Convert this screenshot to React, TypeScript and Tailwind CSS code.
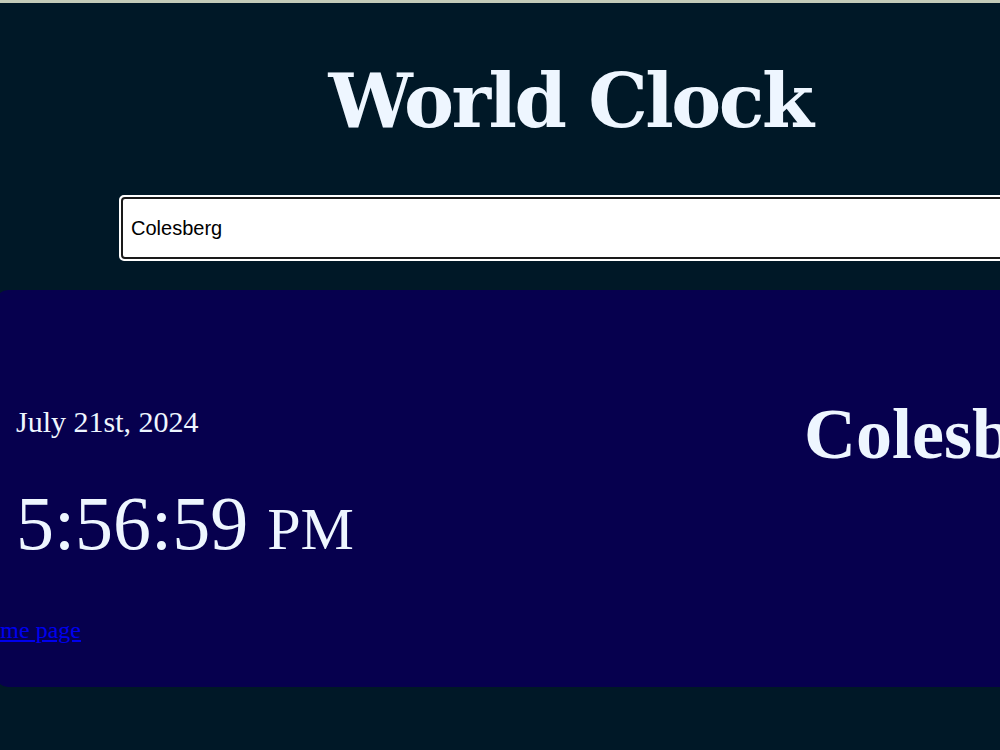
import React from "react";

export default function App() {
  return (
    <div className="w-[1000px] h-[750px] overflow-hidden bg-[#001827]">
      <div className="h-[3px] bg-[#c3cbb9]" />
      <div className="ml-[-30px] w-[1200px]">
        <header className="pt-[55px] flex justify-center">
          <h1
            className="text-[#eef6ff] text-[75px] leading-[87px] font-bold tracking-[-2.5px]"
            style={{ fontFamily: '"DejaVu Serif", serif' }}
          >
            World Clock
          </h1>
        </header>
        <div className="pl-[149px] mt-[50px]">
          <div className="h-[66px] rounded-[5px] border-2 border-white bg-white p-0">
            <div className="h-full rounded-[4px] border-2 border-[#1a1a1a] bg-white flex items-center pl-[8px]">
              <input
                readOnly
                value="Colesberg"
                className="w-full bg-transparent text-[20px] text-black outline-none"
                style={{ fontFamily: '"Liberation Sans", Arial, sans-serif' }}
              />
            </div>
          </div>
        </div>
        <section
          className="ml-[26px] mt-[29px] h-[397px] rounded-[12px] bg-[#06004e] flex text-[#eef6ff]"
          style={{ fontFamily: '"Liberation Serif", "Times New Roman", serif' }}
        >
          <div className="flex flex-col pl-[20px] pt-[114px]">
            <div className="text-[30px] leading-[36px]">July 21st, 2024</div>
            <div className="mt-[38px] text-[76px] leading-[90px] whitespace-nowrap">
              5:56:59 <span className="text-[60px]">PM</span>
            </div>
            <a
              href="#"
              className="ml-[-45px] mt-[42px] text-[24px] leading-[28px] text-[#0000ee] underline"
            >
              Home page
            </a>
          </div>
          <div className="ml-auto w-[366px] pt-[104px]">
            <h2 className="text-[72px] leading-[80px] font-bold whitespace-nowrap">Colesberg</h2>
          </div>
        </section>
      </div>
    </div>
  );
}
